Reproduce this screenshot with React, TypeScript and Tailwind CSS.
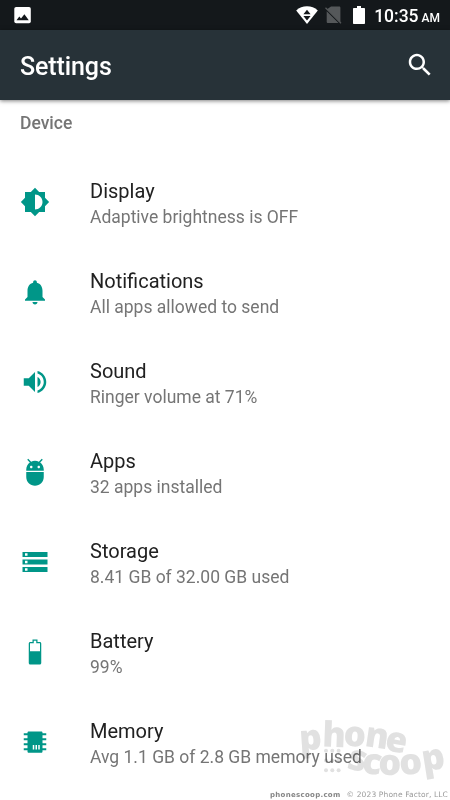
import type { ReactNode } from 'react';

type SettingsItem = {
  title: string;
  summary: string;
  icon: ReactNode;
};

const ITEMS: SettingsItem[] = [
  {
    title: 'Display',
    summary: 'Adaptive brightness is OFF',
    icon: (
      <path d="M20 15.31L23.31 12 20 8.69V4h-4.69L12 .69 8.69 4H4v4.69L.69 12 4 15.31V20h4.69L12 23.31 15.31 20H20v-4.69zM12 18V6c3.31 0 6 2.69 6 6s-2.69 6-6 6z" />
    ),
  },
  {
    title: 'Notifications',
    summary: 'All apps allowed to send',
    icon: (
      <path d="M12 22c1.1 0 2-.9 2-2h-4c0 1.1.9 2 2 2zm6-6v-5c0-3.07-1.64-5.64-4.5-6.32V4c0-.83-.67-1.5-1.5-1.5s-1.5.67-1.5 1.5v.68C7.63 5.36 6 7.92 6 11v5l-2 2v1h16v-1l-2-2z" />
    ),
  },
  {
    title: 'Sound',
    summary: 'Ringer volume at 71%',
    icon: (
      <path d="M3 9v6h4l5 5V4L7 9H3zm13.5 3c0-1.77-1.02-3.29-2.5-4.03v8.05c1.48-.73 2.5-2.25 2.5-4.02zM14 3.23v2.06c2.89.86 5 3.54 5 6.71s-2.11 5.85-5 6.71v2.06c4.01-.91 7-4.49 7-8.77s-2.99-7.86-7-8.77z" />
    ),
  },
  {
    title: 'Apps',
    summary: '32 apps installed',
    icon: (
      <path d="M5 16c0 3.87 3.13 7 7 7s7-3.13 7-7v-4H5v4zM16.12 4.37l2.1-2.1-.82-.83-2.3 2.31C14.16 3.28 13.12 3 12 3s-2.16.28-3.09.75L6.6 1.44l-.82.83 2.1 2.1C6.14 5.64 5 7.68 5 10v1h14v-1c0-2.32-1.14-4.36-2.88-5.63zM9 9c-.55 0-1-.45-1-1s.45-1 1-1 1 .45 1 1-.45 1-1 1zm6 0c-.55 0-1-.45-1-1s.45-1 1-1 1 .45 1 1-.45 1-1 1z" />
    ),
  },
  {
    title: 'Storage',
    summary: '8.41 GB of 32.00 GB used',
    icon: (
      <path d="M2 20h20v-4H2v4zm2-3h2v2H4v-2zM2 4v4h20V4H2zm4 3H4V5h2v2zm-4 7h20v-4H2v4zm2-3h2v2H4v-2z" />
    ),
  },
  {
    title: 'Battery',
    summary: '99%',
    icon: (
      <path
        fillRule="evenodd"
        d="M15.8 4H14V2h-4v2H8.2C7.5 4 7 4.5 7 5.2v15.6c0 .7.5 1.2 1.2 1.2h7.6c.7 0 1.2-.5 1.2-1.2V5.2c0-.7-.5-1.2-1.2-1.2zM8 11.3V5h3V3h2v2h3v6.3H8z"
      />
    ),
  },
  {
    title: 'Memory',
    summary: 'Avg 1.1 GB of 2.8 GB memory used',
    icon: (
      <path
        fillRule="evenodd"
        d="M7 3.5h10c.6 0 1 .4 1 1V5h3v1.6h-3V9h3v1.6h-3V13h3v1.6h-3V17h3v1.6h-3v1c0 .6-.4 1-1 1H7c-.6 0-1-.4-1-1v-1H3V17h3v-2.4H3V13h3v-2.4H3V9h3V6.6H3V5h3v-.5c0-.6.4-1 1-1zM10.2 14.3h1.2v3.6h-1.2zm2.2 0h1.2v3.6h-1.2zm2.2 0h1.2v3.6h-1.2z"
      />
    ),
  },
];

const DOTS = [0, 1, 2].flatMap((row) => [0, 1, 2].map((col) => ({ row, col })));

export default function App() {
  return (
    <div className="relative flex h-[800px] w-[450px] flex-col overflow-hidden bg-white font-['Roboto',sans-serif]">
      <StatusBar />
      <header className="z-10 flex h-[70px] shrink-0 items-center justify-between bg-[#273238] pl-5 pr-[15px] shadow-[0_1px_4px_rgba(0,0,0,0.5)]">
        <h1 className="pt-[3px] text-[25px] font-medium tracking-[-0.1px] text-white">Settings</h1>
        <svg className="size-[30px] fill-white" viewBox="0 0 24 24">
          <path d="M15.5 14h-.79l-.28-.27C15.41 12.59 16 11.11 16 9.5 16 5.91 13.09 3 9.5 3S3 5.91 3 9.5 5.91 16 9.5 16c1.61 0 3.09-.59 4.23-1.57l.27.28v.79l5 4.99L20.49 19l-4.99-5zm-6 0C7.01 14 5 11.99 5 9.5S7.01 5 9.5 5 14 7.01 14 9.5 11.99 14 9.5 14z" />
        </svg>
      </header>

      <main className="flex flex-col">
        <h2 className="h-[57.5px] px-5 pt-[11px] text-[17.5px] leading-6 font-medium text-[#757575]">Device</h2>
        {ITEMS.map((item) => (
          <SettingsRow key={item.title} item={item} />
        ))}
      </main>

      <Watermark />
      <p className="absolute right-[2px] bottom-0 flex items-baseline gap-[6px] leading-[10px] whitespace-nowrap font-['DejaVu_Sans',sans-serif]">
        <span className="text-[7px] font-bold tracking-[0.3px] text-[#858585]">phonescoop.com</span>
        <span className="text-[7.5px] tracking-[0.13px] text-[#9a9a9a]">© 2023 Phone Factor, LLC</span>
      </p>
    </div>
  );
}

function StatusBar() {
  return (
    <div className="flex h-[30px] shrink-0 items-center justify-between bg-[#14181b] pl-[14px] pr-[10px] text-white">
      <svg className="mt-px size-[17px]" viewBox="0 0 17 17">
        <rect x="0.3" y="0" width="16.5" height="16.3" rx="1.8" fill="white" />
        <path d="M2.5 13.3 5.3 9.5 7 11.5 10.4 7.3 14.8 13.3z" fill="#14181b" />
      </svg>
      <div className="flex items-center">
        <svg className="mr-[7px] h-[18px] w-[22px]" viewBox="0 0 22 18">
          <path d="M11 18 .2 4.4C3.2 1.8 6.9.3 11 .3s7.8 1.5 10.8 4.1z" fill="white" />
          <path d="M11 3.8 14.6 8.3H7.4zM7.4 9.9h7.2L11 14.4z" fill="#14181b" />
        </svg>
        <svg className="mr-[11px] h-[18px] w-[17px]" viewBox="0 0 17 18">
          <path d="M6 .5h8.2c.7 0 1.2.5 1.2 1.2v14.5L2 3.3zM1.7 5.2 13.5 17H3c-.8 0-1.3-.5-1.3-1.3z" fill="#55585a" />
          <path d="M.5 1.8 16 17.3" stroke="#55585a" strokeWidth="1.3" />
        </svg>
        <svg className="mr-[9px] h-[18px] w-[12px]" viewBox="0 0 12 18">
          <path d="M4 0h4v2h3c.6 0 1 .4 1 1v14c0 .6-.4 1-1 1H1c-.6 0-1-.4-1-1V3c0-.6.4-1 1-1h3z" fill="white" />
        </svg>
        <span className="flex items-baseline gap-[3px] pt-[3px] text-[17.5px] leading-5 font-medium">
          10:35 <span className="text-[12px]">AM</span>
        </span>
      </div>
    </div>
  );
}

function SettingsRow({ item }: { item: SettingsItem }) {
  return (
    <div className="flex h-[90px] shrink-0 items-center px-5">
      <svg className="mr-10 mb-px size-[30px] shrink-0 fill-[#009688]" viewBox="0 0 24 24">
        {item.icon}
      </svg>
      <div className="whitespace-nowrap pt-[3px]">
        <div className="mb-0.5 text-[20px] leading-6 text-[#212121]">{item.title}</div>
        <div className="text-[17.5px] leading-6 text-[#757575]">{item.summary}</div>
      </div>
    </div>
  );
}

// each letter is placed and tilted on its own so the two words follow a wave
function Watermark() {
  return (
    <svg
      className="absolute right-0 bottom-[10px] h-[80px] w-[155px] overflow-visible fill-[#e1e1e1] font-['Open_Sans',sans-serif] font-extrabold mix-blend-multiply"
      viewBox="0 0 155 80"
    >
      <text fontSize="35" x="5 27 48 69 89" y="40.5 36.5 35.5 36 40" rotate="-4 2 4 8 10">
        phone
      </text>
      <text fontSize="36" x="51 66 83 105 128.5" y="58 62.5 64.5 65 61.5" rotate="14 8 2 -4 -9">
        scoop
      </text>
      {DOTS.map(({ row, col }) => (
        <circle key={`${row}-${col}`} cx={31 + col * 6.3} cy={40.7 + row * 9.8} r="2" />
      ))}
    </svg>
  );
}
